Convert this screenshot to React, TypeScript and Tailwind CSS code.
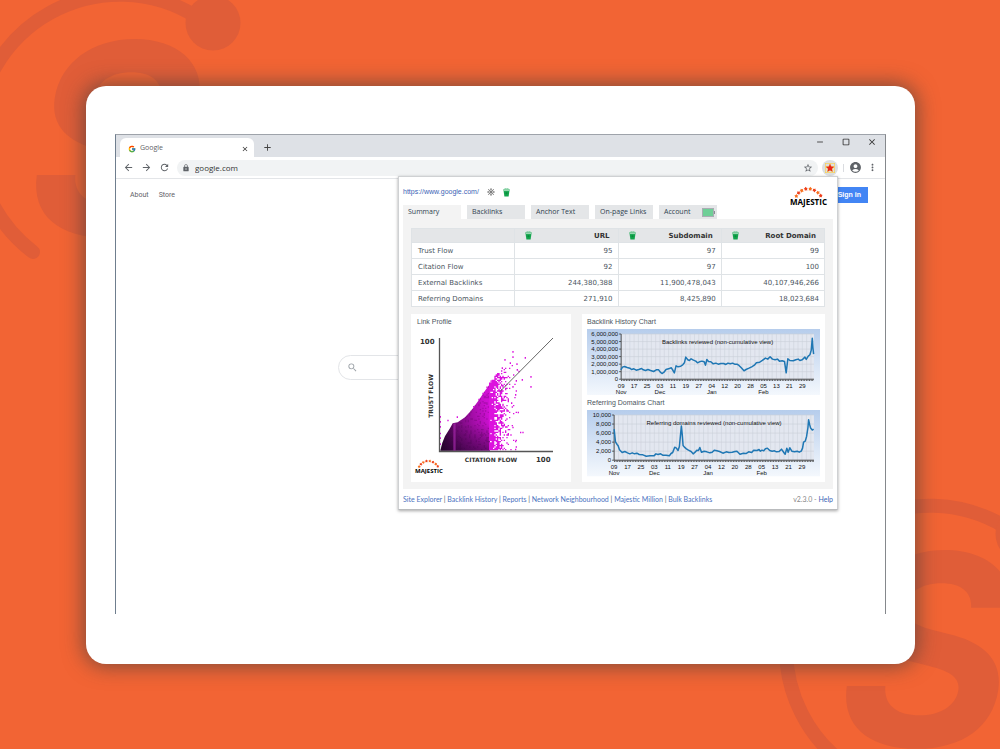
import { useState } from 'react';
import { FcGoogle } from 'react-icons/fc';
import {
  MdAccountCircle,
  MdAdd,
  MdArrowBack,
  MdArrowForward,
  MdClose,
  MdCropSquare,
  MdLock,
  MdMoreVert,
  MdRefresh,
  MdRemove,
  MdSearch,
  MdStar,
  MdStarBorder,
} from 'react-icons/md';

const tabs = ['Summary', 'Backlinks', 'Anchor Text', 'On-page Links', 'Account'];

const columns = ['URL', 'Subdomain', 'Root Domain'];

const rows = [
  { label: 'Trust Flow', values: ['95', '97', '99'] },
  { label: 'Citation Flow', values: ['92', '97', '100'] },
  { label: 'External Backlinks', values: ['244,380,388', '11,900,478,043', '40,107,946,266'] },
  { label: 'Referring Domains', values: ['271,910', '8,425,890', '18,023,684'] },
];

const footerLinks = [
  'Site Explorer',
  'Backlink History',
  'Reports',
  'Network Neighbourhood',
  'Majestic Million',
  'Bulk Backlinks',
];

const days = ['09', '17', '25', '03', '11', '19', '27', '04', '12', '20', '28', '05', '13', '21', '29'];
const months: Record<number, string> = { 0: 'Nov', 3: 'Dec', 7: 'Jan', 11: 'Feb' };

// Points are in thirds of a pixel, measured from the chart's top left corner
const backlinkPoints =
  '101,122 106,114 112,112 120,115 128,117 133,121 140,119 147,123 155,121 163,118 168,122 175,124 182,121 190,124 199,127 207,122 214,122 219,129 224,133 230,129 236,121 246,118 252,116 257,124 261,131 266,110 272,113 280,111 286,107 291,101 295,84 301,92 306,94 311,89 318,93 325,96 330,101 336,98 343,96 350,98 354,108 358,91 363,97 370,98 377,104 385,102 392,105 400,103 408,103 415,106 421,102 428,104 435,102 441,105 448,105 454,109 461,116 469,125 475,121 484,117 492,113 500,108 506,101 516,99 524,94 533,87 540,90 547,83 554,90 562,92 569,90 575,96 583,95 590,97 595,131 600,89 606,94 616,95 624,92 631,90 636,94 643,92 651,84 655,91 661,81 666,77 670,63 673,28 675,57 677,75';

const domainPoints =
  '81,57 85,95 90,103 93,107 97,119 105,127 113,124 121,128 128,131 135,128 142,131 149,129 156,133 167,134 177,138 188,137 196,137 200,137 206,131 212,133 220,131 226,135 236,135 246,137 251,130 256,127 262,111 267,114 272,121 276,109 279,78 282,48 285,79 287,106 291,111 297,116 303,120 311,124 317,131 323,126 328,120 333,121 337,112 342,126 350,123 358,125 367,128 374,126 380,120 388,122 396,124 406,129 416,125 424,127 434,126 442,124 448,123 457,132 467,129 475,130 483,125 492,127 498,120 508,121 514,118 518,123 523,120 528,122 533,116 539,114 546,121 553,123 560,122 566,125 574,124 581,117 588,127 592,132 597,114 601,126 606,113 612,123 620,125 628,123 634,126 640,123 644,114 647,96 652,93 656,79 660,53 662,29 665,43 668,54 673,60 677,57';

// Upper edge of the link profile cloud
const edge = [
  [108, 425],
  [112, 402],
  [120, 382],
  [135, 358],
  [143, 343],
  [158, 340],
  [180, 325],
  [200, 303],
  [220, 275],
  [240, 245],
  [255, 222],
  [270, 200],
  [300, 178],
  [340, 150],
];

const cloudShape =
  'M106 425L112 402 120 382 135 358 143 343 158 340 180 325 200 303 220 275 240 245 255 224V425z';

function edgeAt(x: number) {
  for (let i = 1; i < edge.length; i++) {
    const [x1, y1] = edge[i];
    const [x0, y0] = edge[i - 1];
    if (x <= x1) return y0 + ((y1 - y0) * (x - x0)) / (x1 - x0);
  }
  return 150;
}

function densityAt(x: number) {
  if (x < 268) return 0.95;
  if (x < 280) return 0.72;
  if (x < 290) return 0.5;
  if (x < 304) return 0.35;
  if (x < 314) return 0.17;
  return 0.05;
}

function buildCloud() {
  let seed = 7;
  const random = () => {
    seed = (seed * 16807) % 2147483647;
    return seed / 2147483647;
  };
  let pink = '';
  let dark = '';
  for (let x = 108; x < 334; x += 4) {
    const top = edgeAt(x);
    for (let y = 424; y > top; y -= 4) {
      const spot = `M${x} ${y}h4v-4h-4z`;
      if (x < 252) {
        if (random() < 0.18) dark += spot;
      } else if (random() < densityAt(x)) {
        pink += spot;
      }
    }
    if (x > 200 && x < 262 && random() < 0.5) pink += `M${x} ${top - 2}h4v-4h-4z`;
  }
  const strays = [
    [322, 131], [322, 147], [298, 155], [359, 149], [314, 165], [334, 168], [335, 185], [376, 206],
    [376, 236], [332, 218], [322, 236], [350, 215], [338, 313], [345, 373], [352, 373], [322, 358],
    [330, 400], [330, 424], [340, 190], [290, 180], [104, 326], [104, 341], [104, 356], [104, 376],
    [104, 390], [104, 408], [127, 337], [155, 327], [330, 260], [318, 285],
  ];
  strays.forEach(([x, y]) => {
    pink += `M${x} ${y}h4v-5h-4z`;
  });
  return { pink, dark };
}

const cloud = buildCloud();

function BrandMark({ className }: { className: string }) {
  return (
    <svg className={className} width="290" height="290" viewBox="-30 -20 290 290" aria-hidden="true">
      <g fill="#e05d38">
        <path
          d="M33 252A144 144 0 0 1-24 139A144 144 0 0 1 197 17"
          fill="none"
          stroke="#e05d38"
          strokeWidth="14"
          strokeLinecap="round"
        />
        <circle cx="213" cy="23" r="27.5" />
        <text x="115" y="235" textAnchor="middle" className="font-['Inter'] text-[266px] font-bold italic">
          S
        </text>
      </g>
    </svg>
  );
}

function MajesticLogo({ small = false }: { small?: boolean }) {
  const dots = [
    [2.5, 11],
    [5, 7.5],
    [8.5, 4.8],
    [13, 3],
    [18, 3],
    [22.5, 4.5],
    [26.5, 7.2],
    [29.5, 10.5],
  ];
  return (
    <div className="flex flex-col items-center">
      <svg width={small ? 23 : 29} height={small ? 9 : 12} viewBox="0 0 32 13" aria-hidden="true">
        {dots.map(([x, y], i) => (
          <path
            key={i}
            transform={`translate(${x} ${y}) rotate(${i * 20 - 70})`}
            d="M0-2.2L.9-1 2.2-.6 1.3.5 1.4 2 0 1.5-1.4 2-1.3.5-2.2-.6-.9-1z"
            fill={i % 2 ? '#ee3f1a' : '#f7701f'}
          />
        ))}
      </svg>
      <span
        className={
          small
            ? "font-['Open_Sans',sans-serif] text-[6px] leading-[6px] font-bold text-black"
            : "font-['Open_Sans',sans-serif] text-[8px] leading-[8px] font-bold text-black"
        }
      >
        MAJESTIC
      </span>
    </div>
  );
}

function Bucket() {
  return (
    <svg width="7" height="9" viewBox="0 0 7 9" className="shrink-0" aria-hidden="true">
      <path d="M.4 1.600h6.200L5.600 8.600H1.400z" fill="#12a44c" />
      <path d="M.5 1.800C1-.1 6-.1 6.500 1.800" fill="none" stroke="#7fcf9f" strokeWidth=".8" />
      <path d="M1 2.600h5" stroke="#c9efd8" strokeWidth=".8" />
      <circle cx="3.500" cy="5.300" r="1" fill="#0b8a3c" />
    </svg>
  );
}

function Gear() {
  return (
    <svg width="8" height="8" viewBox="0 0 8 8" className="shrink-0" aria-hidden="true">
      <g stroke="#666" fill="none">
        <circle cx="4" cy="4" r="2.200" strokeWidth=".8" />
        <path
          d="M4 .2v1.600M4 6.200v1.600M.2 4h1.600M6.200 4h1.600M1.300 1.300l1.100 1.100M5.600 5.600l1.100 1.100M6.700 1.300L5.600 2.400M2.400 5.600L1.300 6.700"
          strokeWidth=".9"
        />
      </g>
      <circle cx="4" cy="4" r="1" fill="#555" />
    </svg>
  );
}

function Battery() {
  return (
    <svg width="13" height="9" viewBox="0 0 13 9" className="shrink-0" aria-hidden="true">
      <rect x=".5" y=".5" width="11" height="8" fill="#6fcf97" stroke="#a9adb3" />
      <path d="M12.500 3v3" stroke="#888d94" />
    </svg>
  );
}

function LinkProfile() {
  return (
    <svg viewBox="0 0 160 153" className="block w-full font-['DejaVu_Sans',sans-serif]" role="img" aria-label="Link Profile">
      <defs>
        <linearGradient id="cloud" x1="0" x2="1" y1=".8" y2=".5">
          <stop offset="0" stopColor="#2c0330" />
          <stop offset=".35" stopColor="#720a78" />
          <stop offset=".75" stopColor="#ac0eb0" />
          <stop offset="1" stopColor="#d010d4" />
        </linearGradient>
        <linearGradient id="cloudBase" x1="0" x2="0" y1="0" y2="1">
          <stop offset=".6" stopColor="#20002a" stopOpacity="0" />
          <stop offset="1" stopColor="#20002a" stopOpacity=".5" />
        </linearGradient>
      </defs>
      <g transform="translate(-6 -20) scale(0.3333)">
        <path d={cloudShape} fill="url(#cloud)" />
        <path d={cloud.dark} fill="#4a0050" fillOpacity=".25" />
        <path d={cloudShape} fill="url(#cloudBase)" />
        <path d="M145 343h7v82h-7z" fill="#b02cb6" fillOpacity=".6" />
        <path d={cloud.pink} fill="#dc12de" />
      </g>
      <path d="M28.500 9v113.500H142" fill="none" stroke="#555" strokeWidth="1.300" />
      <path d="M89 62.500L142 9" stroke="#555" strokeWidth=".9" />
      <g className="text-[7px] font-bold" fill="#333">
        <text x="9" y="15">
          100
        </text>
        <text x="125" y="133">
          100
        </text>
        <text x="80" y="133" textAnchor="middle" className="text-[6px]">
          CITATION FLOW
        </text>
        <text transform="translate(22 67) rotate(-90)" textAnchor="middle" className="text-[6px]">
          TRUST FLOW
        </text>
      </g>
    </svg>
  );
}

interface HistoryChartProps {
  id: string;
  title: string;
  labels: string[];
  left: number;
  points: string;
}

function HistoryChart({ id, title, labels, left, points }: HistoryChartProps) {
  const right = 226;
  const top = 5;
  const bottom = 50;
  const step = (right - left) / 14.9;
  const gap = (bottom - top) / (labels.length - 1);

  return (
    <svg viewBox="0 0 232 66" className="block w-full font-['Liberation_Sans',sans-serif]" role="img" aria-label={title}>
      <defs>
        <linearGradient id={id} x1="0" x2="0" y1="0" y2="1">
          <stop offset="0" stopColor="#b6cdec" />
          <stop offset="1" stopColor="#f4f8fd" />
        </linearGradient>
      </defs>
      <rect width="232" height="66" fill={`url(#${id})`} />
      <rect x={left} y={top} width={right - left} height={bottom - top} fill="#e3e7f0" />
      {Array.from({ length: 45 }, (_, i) => {
        const x = left + (i * step) / 3;
        return <path key={i} d={`M${x} ${top}V${bottom}`} stroke="#c9ced8" strokeWidth=".5" />;
      })}
      {labels.map((label, i) => (
        <g key={label}>
          <path d={`M${left - 2} ${top + i * gap}H${left}`} stroke="#333" strokeWidth=".8" />
          <path d={`M${left} ${top + i * gap}H${right}`} stroke="#c9ced8" strokeWidth=".6" />
          <text x={left - 3} y={top + i * gap + 2} textAnchor="end" className="text-[6px]" fill="#111">
            {label}
          </text>
        </g>
      ))}
      <path d={`M${left} ${top}V${bottom}H${right}`} fill="none" stroke="#444" strokeWidth=".9" />
      <path d={`M${left} ${bottom + 1}H${right}`} stroke="#444" strokeWidth="1.500" strokeDasharray=".8 .8" />
      {days.map((day, i) => (
        <text key={i} x={left + i * step} y="59" textAnchor="middle" className="text-[6px]" fill="#111">
          {day}
        </text>
      ))}
      {Object.entries(months).map(([i, month]) => (
        <text key={month} x={left + Number(i) * step} y="65" textAnchor="middle" className="text-[6px]" fill="#111">
          {month}
        </text>
      ))}
      <polyline
        points={points}
        transform="scale(0.3333)"
        fill="none"
        stroke="#1f77b4"
        strokeWidth="4.500"
        strokeLinejoin="round"
      />
      <text x={(left + right) / 2} y="15" textAnchor="middle" className="text-[6px]" fill="#111">
        {title}
      </text>
    </svg>
  );
}

function MajesticPopup() {
  const [active, setActive] = useState('Summary');

  return (
    <section className="absolute top-[41px] right-[47px] flex w-[440px] flex-col border border-[#cfd1d3] border-b-[#b9bbbd] bg-white px-1 font-['Liberation_Sans',sans-serif] text-[7px] text-[#4b5560] shadow-[0_1px_3px_rgba(0,0,0,0.35)]">
      <div className="flex h-7 justify-between">
        <div className="flex h-[30px] items-center gap-2">
          <a href="#" className="text-[#3b62b5]">
            https://www.google.com/
          </a>
          <Gear />
          <Bucket />
        </div>
        <div className="pt-[9px] pr-1.5">
          <MajesticLogo />
        </div>
      </div>

      {/* Tabs */}
      <div role="tablist" className="flex gap-1.5 font-['Open_Sans',sans-serif]">
        {tabs.map((tab) => (
          <button
            key={tab}
            role="tab"
            aria-selected={tab === active}
            onClick={() => setActive(tab)}
            className={`flex h-3.5 w-[58px] items-center justify-between pr-0.5 pl-[5px] text-[#2f3f4f] ${
              tab === active ? 'bg-[#f3f3f3]' : 'bg-[#e4e6e8]'
            }`}
          >
            {tab}
            {tab === 'Account' && <Battery />}
          </button>
        ))}
      </div>

      <div className="flex flex-col gap-[7px] bg-[#f3f3f3] px-2 pt-[9px] pb-[7px]">
        <table className="w-full table-fixed border-collapse bg-white font-['DejaVu_Sans',sans-serif] leading-[10px]">
          <thead>
            <tr className="h-3.5 bg-[#e4e6e8] text-[#333]">
              <td className="border border-[#dfe3e6] p-0" />
              {columns.map((column) => (
                <th key={column} scope="col" className="border border-[#dfe3e6] p-0 pr-2 pl-2.5">
                  <div className="flex items-center justify-between">
                    <Bucket />
                    {column}
                  </div>
                </th>
              ))}
            </tr>
          </thead>
          <tbody>
            {rows.map((row) => (
              <tr key={row.label} className="h-4">
                <th scope="row" className="border border-[#dfe3e6] p-0 pl-1.5 text-left font-normal">
                  {row.label}
                </th>
                {row.values.map((value, i) => (
                  <td key={i} className="border border-[#dfe3e6] p-0 pr-[5px] text-right">
                    {value}
                  </td>
                ))}
              </tr>
            ))}
          </tbody>
        </table>

        <div className="flex gap-[11px]">
          <div className="w-40 bg-white">
            <h2 className="h-[15px] pl-1.5 leading-[15px]">Link Profile</h2>
            <div className="relative">
              <LinkProfile />
              <div className="absolute bottom-2 left-1">
                <MajesticLogo small />
              </div>
            </div>
          </div>
          <div className="flex-1 bg-white px-[5px] pb-1">
            <h2 className="h-[15px] leading-[15px]">Backlink History Chart</h2>
            <HistoryChart
              id="backlinks"
              title="Backlinks reviewed (non-cumulative view)"
              labels={['6,000,000', '5,000,000', '4,000,000', '3,000,000', '2,000,000', '1,000,000', '0']}
              left={34}
              points={backlinkPoints}
            />
            <h2 className="h-[15px] leading-[15px]">Referring Domains Chart</h2>
            <HistoryChart
              id="domains"
              title="Referring domains reviewed (non-cumulative view)"
              labels={['10,000', '8,000', '6,000', '4,000', '2,000', '0']}
              left={27}
              points={domainPoints}
            />
          </div>
        </div>
      </div>

      <footer className="flex h-5 items-center justify-between font-['Lato',sans-serif]">
        <nav className="whitespace-pre">
          {footerLinks.map((link, i) => (
            <span key={link}>
              {i > 0 && ' | '}
              <a href="#" className="text-[#4a72c0]">
                {link}
              </a>
            </span>
          ))}
        </nav>
        <span className="text-[#888]">
          v2.3.0 -{' '}
          <a href="#" className="text-[#3b62b5]">
            Help
          </a>
        </span>
      </footer>
    </section>
  );
}

function BrowserWindow() {
  return (
    <div className="relative border-x border-t border-t-[#9ea3aa] border-r-[#85888c] border-l-[#6f7e8e] bg-white text-[#5f6368]">
      {/* Tab strip */}
      <div className="flex h-[22px] items-end justify-between bg-[#dee1e6] pl-1">
        <div className="flex items-center gap-2">
          <div className="flex h-[19px] w-[134px] items-center gap-1 rounded-t-md bg-white pt-0.5 pr-[5px] pl-2 font-['Open_Sans',sans-serif] text-[7px]">
            <FcGoogle size={8} />
            <span className="flex-1">Google</span>
            <button aria-label="Close tab">
              <MdClose size={8} className="text-[#333]" />
            </button>
          </div>
          <button aria-label="New tab">
            <MdAdd size={11} className="text-[#444]" />
          </button>
        </div>
        <div className="flex items-center gap-4 self-start pt-0.5 pr-2 text-[#333]">
          <button aria-label="Minimize">
            <MdRemove size={10} />
          </button>
          <button aria-label="Maximize">
            <MdCropSquare size={10} />
          </button>
          <button aria-label="Close window">
            <MdClose size={10} />
          </button>
        </div>
      </div>

      {/* Toolbar */}
      <div className="flex h-[22px] items-center gap-1 border-b border-[#e3e5e8] bg-white px-[7px]">
        <div className="flex items-center gap-[7px] pr-[3px]">
          <button aria-label="Back">
            <MdArrowBack size={11} />
          </button>
          <button aria-label="Forward">
            <MdArrowForward size={11} />
          </button>
          <button aria-label="Reload">
            <MdRefresh size={11} />
          </button>
        </div>
        <div className="flex h-4 flex-1 items-center gap-[5px] rounded-full bg-[#f1f3f4] px-[5px]">
          <MdLock size={8} />
          <input
            aria-label="Address"
            defaultValue="google.com"
            className="min-w-0 flex-1 bg-transparent font-['Open_Sans',sans-serif] text-[8px] leading-3 text-[#333] outline-none"
          />
          <MdStarBorder size={10} />
        </div>
        <div className="flex items-center gap-[5px]">
          <button aria-label="Majestic" className="rounded-full bg-[#dcdfe2] p-[3px]">
            <MdStar size={10} fill="#e8261c" stroke="#fbd34d" strokeWidth="2" className="[paint-order:stroke]" />
          </button>
          <span className="h-2 w-px bg-[#dadce0]" />
          <button aria-label="Profile">
            <MdAccountCircle size={13} />
          </button>
          <button aria-label="Menu">
            <MdMoreVert size={11} />
          </button>
        </div>
      </div>

      {/* Page */}
      <div className="flex min-h-[435px] flex-col">
        <div className="flex items-center justify-between pt-2 pr-[17px] pl-3.5">
          <nav className="flex gap-2.5 font-['Roboto',sans-serif] text-[7px]">
            <a href="#">About</a>
            <a href="#">Store</a>
          </nav>
          <a
            href="#"
            className="bg-[#4285f4] px-[7px] py-1 font-['Liberation_Sans',sans-serif] text-[7px] leading-2 font-bold text-white"
          >
            Sign in
          </a>
        </div>
        <label className="mx-auto mt-[152px] flex h-[25px] w-[326px] items-center gap-2 rounded-full border border-[#e3e5e8] px-2 text-[#9aa0a6]">
          <MdSearch size={11} />
          <input aria-label="Search" className="min-w-0 flex-1 text-[8px] outline-none" />
        </label>
      </div>

      <MajesticPopup />
    </div>
  );
}

export default function App() {
  return (
    <div className="relative min-h-screen overflow-hidden bg-[#f26434] pt-[86px] pr-[85px] pb-[85px] pl-[86px]">
      <BrandMark className="absolute -top-5 -left-[30px]" />
      <BrandMark className="absolute -right-[70px] -bottom-8" />
      <main className="relative rounded-[20px] bg-white px-[29px] pt-12 pb-[50px] shadow-[0_0_20px_3px_rgba(60,60,60,0.6)]">
        <BrowserWindow />
      </main>
    </div>
  );
}
